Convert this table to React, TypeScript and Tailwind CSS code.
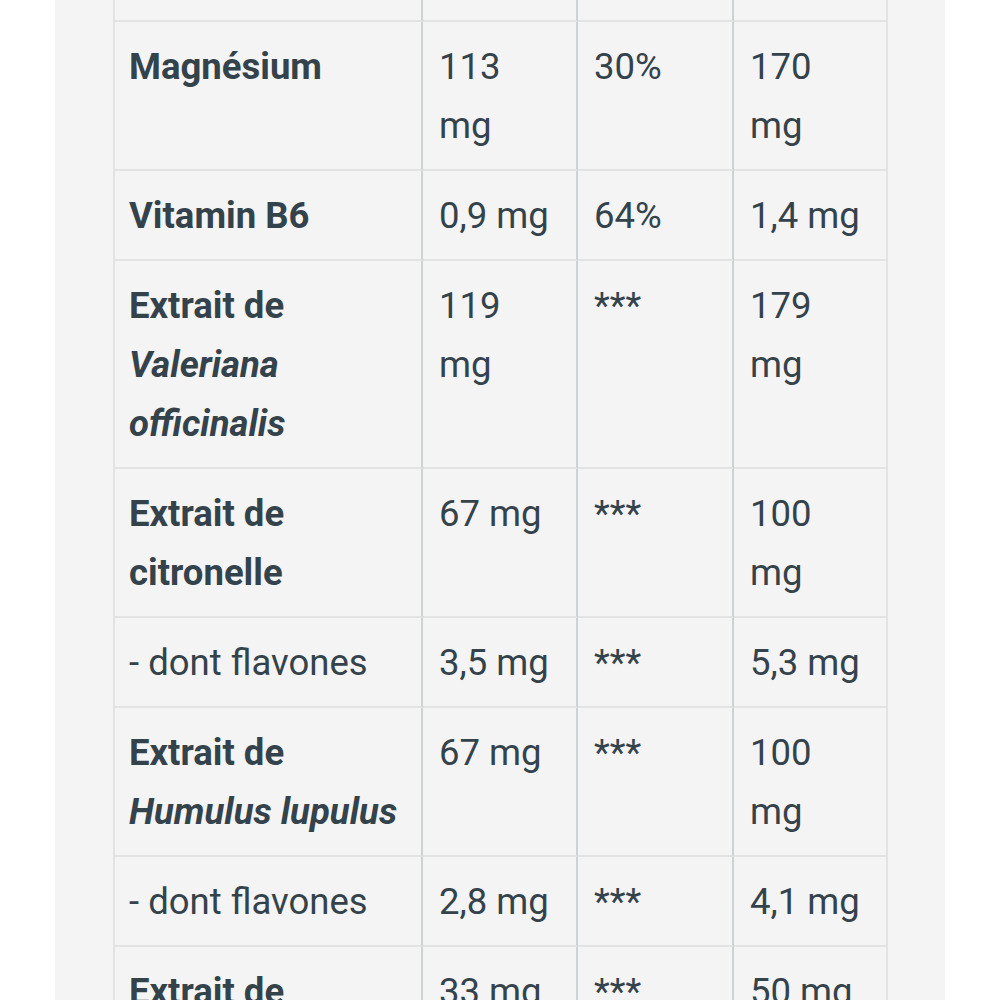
const rows: { name: React.ReactNode; amount: React.ReactNode; vnr: string; dose: React.ReactNode; bold?: boolean }[] = [
  {
    name: "Magnésium",
    amount: <>113<br />mg</>,
    vnr: "30%",
    dose: <>170<br />mg</>,
    bold: true,
  },
  { name: "Vitamin B6", amount: "0,9 mg", vnr: "64%", dose: "1,4 mg", bold: true },
  {
    name: <>Extrait de<br /><i>Valeriana</i><br /><i>officinalis</i></>,
    amount: <>119<br />mg</>,
    vnr: "***",
    dose: <>179<br />mg</>,
    bold: true,
  },
  {
    name: <>Extrait de<br />citronelle</>,
    amount: "67 mg",
    vnr: "***",
    dose: <>100<br />mg</>,
    bold: true,
  },
  { name: "- dont flavones", amount: "3,5 mg", vnr: "***", dose: "5,3 mg" },
  {
    name: <>Extrait de<br /><i>Humulus lupulus</i></>,
    amount: "67 mg",
    vnr: "***",
    dose: <>100<br />mg</>,
    bold: true,
  },
  { name: "- dont flavones", amount: "2,8 mg", vnr: "***", dose: "4,1 mg" },
  { name: "Extrait de", amount: "33 mg", vnr: "***", dose: "50 mg", bold: true },
];

const cell = "pt-[15px] pb-[14px] pr-4 border-b-2 border-b-[#e3e3e3] border-r-2 whitespace-nowrap";
const inner = "border-r-[#cdd2d5]";

export default function App() {
  return (
    <div className="h-screen overflow-hidden bg-white">
      <div className="mx-[55px] h-full bg-[#f4f4f4] pl-[58px]">
        <div
          className="grid w-[775px] grid-cols-[308px_155px_156px_154px] border-l-2 border-l-[#e3e3e3] text-[36.5px] leading-[59px] text-[#34434b]"
          style={{ fontFamily: "Roboto, 'Liberation Sans', sans-serif" }}
        >
          {/* row cut off at the top */}
          <div className={`h-[22px] border-b-2 border-b-[#e3e3e3] border-r-2 ${inner}`} />
          <div className={`h-[22px] border-b-2 border-b-[#e3e3e3] border-r-2 ${inner}`} />
          <div className={`h-[22px] border-b-2 border-b-[#e3e3e3] border-r-2 ${inner}`} />
          <div className="h-[22px] border-b-2 border-b-[#e3e3e3] border-r-2 border-r-[#e3e3e3]" />

          {rows.map((r, i) => (
            <div key={i} className="contents">
              <div className={`${cell} ${inner} pl-[14px] ${r.bold ? "font-bold" : ""}`}>{r.name}</div>
              <div className={`${cell} ${inner} pl-4`}>{r.amount}</div>
              <div className={`${cell} ${inner} pl-4`}>{r.vnr}</div>
              <div className={`${cell} border-r-[#e3e3e3] pl-4`}>{r.dose}</div>
            </div>
          ))}
        </div>
      </div>
    </div>
  );
}
